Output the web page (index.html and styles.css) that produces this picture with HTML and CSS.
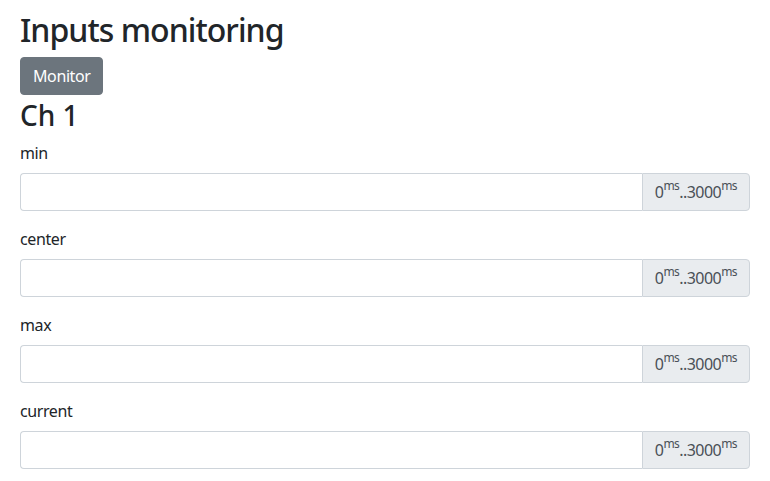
FILE: index.html
```html
<!DOCTYPE html>
<html>
<head>
<meta charset="utf-8">
<link rel="stylesheet" href="styles.css">
</head>
<body>
<div class="container">
  <h2 class="title">Inputs monitoring</h2>
  <button class="btn">Monitor</button>
  <h3 class="channel">Ch 1</h3>
  <div class="form-group">
    <label>min</label>
    <div class="input-group">
      <input type="text" class="form-control">
      <span class="append">0<sup>ms</sup>..3000<sup>ms</sup></span>
    </div>
  </div>
  <div class="form-group">
    <label>center</label>
    <div class="input-group">
      <input type="text" class="form-control">
      <span class="append">0<sup>ms</sup>..3000<sup>ms</sup></span>
    </div>
  </div>
  <div class="form-group">
    <label>max</label>
    <div class="input-group">
      <input type="text" class="form-control">
      <span class="append">0<sup>ms</sup>..3000<sup>ms</sup></span>
    </div>
  </div>
  <div class="form-group">
    <label>current</label>
    <div class="input-group">
      <input type="text" class="form-control">
      <span class="append">0<sup>ms</sup>..3000<sup>ms</sup></span>
    </div>
  </div>
</div>
</body>
</html>
```
FILE: styles.css
```css
* { box-sizing: border-box; }
body {
  margin: 0;
  font-family: "Noto Sans", "Open Sans", sans-serif;
  font-size: 16px;
  line-height: 1.5;
  color: #212529;
  background: #fff;
  letter-spacing: -0.025em;
}
.container {
  padding: 11px 20px 0 20px;
}
.title {
  font-size: 32px;
  font-weight: 500;
  line-height: 1.2;
  margin: 0 0 8px 0;
  letter-spacing: -0.03em;
}
.btn {
  display: block;
  font-family: inherit;
  font-size: 16px;
  line-height: 24px;
  letter-spacing: -0.025em;
  padding: 6px 12px;
  border: 1px solid #6c757d;
  background: #6c757d;
  color: #fff;
  border-radius: 4px;
}
.channel {
  font-size: 28px;
  font-weight: 500;
  line-height: 1.2;
  margin: 4px 0 8px 0;
  letter-spacing: 0;
}
.form-group { margin-bottom: 16px; }
label {
  display: block;
  margin-bottom: 8px;
  line-height: 24px;
}
.input-group {
  display: flex;
  align-items: stretch;
}
.form-control {
  flex: 1 1 auto;
  min-width: 0;
  height: 38px;
  padding: 6px 12px;
  font-family: inherit;
  font-size: 16px;
  border: 1px solid #ced4da;
  border-right: 0;
  border-radius: 4px 0 0 4px;
  color: #495057;
}
.append {
  display: flex;
  align-items: center;
  padding: 6px 12px;
  background: #e9ecef;
  border: 1px solid #ced4da;
  border-radius: 0 4px 4px 0;
  color: #495057;
  line-height: 24px;
  white-space: nowrap;
  letter-spacing: -0.035em;
}
sup {
  font-size: 75%;
  line-height: 0;
  position: relative;
  top: -0.5em;
  vertical-align: baseline;
}
```
